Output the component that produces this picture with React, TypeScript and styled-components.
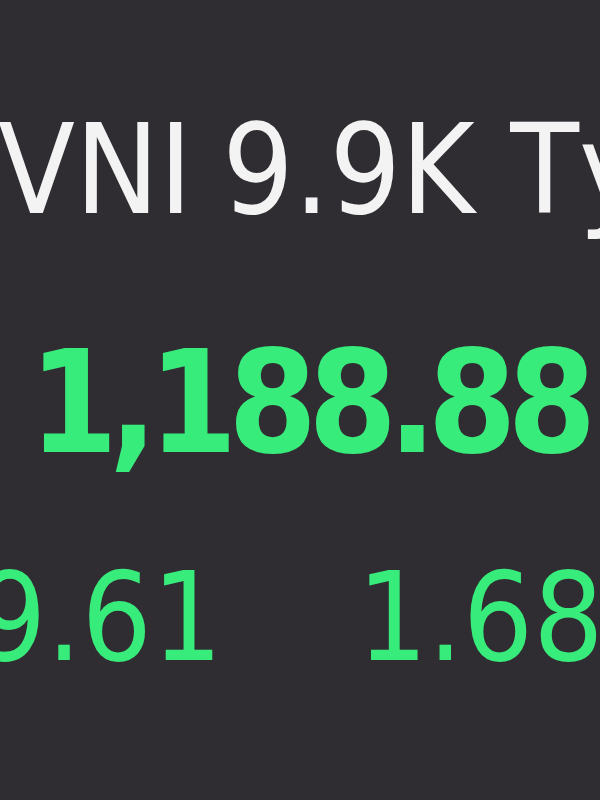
import React from 'react';
import styled, { createGlobalStyle } from 'styled-components';

const GlobalStyle = createGlobalStyle`
  html, body {
    margin: 0;
    padding: 0;
    background: #2f2d32;
  }
`;

const TickerCard = styled.div`
  width: 600px;
  height: 800px;
  overflow: hidden;
  background: #2f2d32;
  padding-top: 107px;
  box-sizing: border-box;
  font-family: 'DejaVu Sans', 'Liberation Sans', sans-serif;
  font-stretch: condensed;
  white-space: nowrap;
`;

const Headline = styled.div`
  display: flex;
  gap: 30px;
  margin-left: -2px;
  font-size: 125px;
  line-height: 1;
  color: #f3f3f3;
`;

const Price = styled.div<{ $up?: boolean }>`
  margin-top: 100px;
  margin-left: 29px;
  font-size: 142px;
  font-weight: 700;
  letter-spacing: -9px;
  line-height: 1;
  color: ${(p) => (p.$up ? '#38ec7b' : '#ff4d4f')};
`;

const ChangeRow = styled.div<{ $up?: boolean }>`
  display: flex;
  gap: 135px;
  margin-top: 82px;
  margin-left: -24px;
  font-size: 123px;
  line-height: 1;
  color: ${(p) => (p.$up ? '#38ec7b' : '#ff4d4f')};
`;

const ticker = {
  symbol: 'VNI',
  volume: '9.9K Tỷ',
  price: '1,188.88',
  change: '9.61',
  percent: '1.68',
  up: true,
};

export default function App() {
  return (
    <>
      <GlobalStyle />
      <TickerCard>
        <Headline>
          <span>{ticker.symbol}</span>
          <span>{ticker.volume}</span>
        </Headline>
        <Price $up={ticker.up}>{ticker.price}</Price>
        <ChangeRow $up={ticker.up}>
          <span>{ticker.change}</span>
          <span>{ticker.percent}</span>
        </ChangeRow>
      </TickerCard>
    </>
  );
}
